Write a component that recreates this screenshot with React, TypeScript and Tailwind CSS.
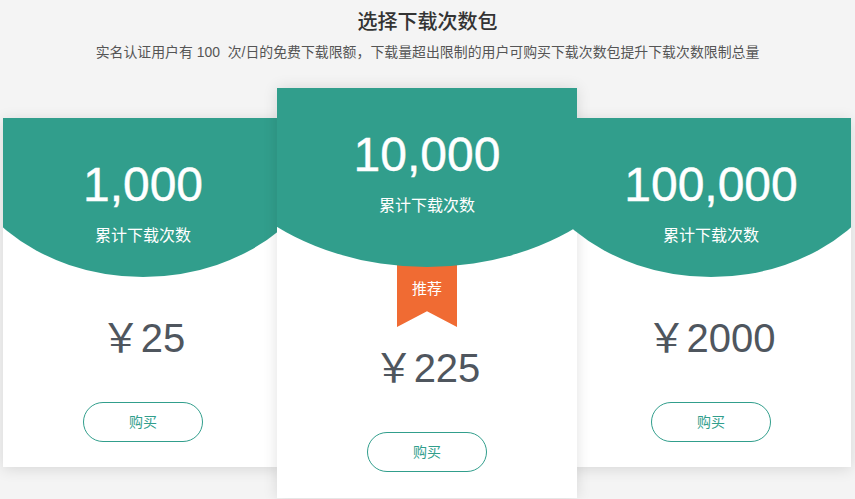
const plans = [
  { count: "1,000", price: "25", featured: false },
  { count: "10,000", price: "225", featured: true },
  { count: "100,000", price: "2000", featured: false },
];

type Plan = (typeof plans)[number];

const PlanCard = ({ plan }: { plan: Plan }) => {
  const big = plan.featured;

  return (
    <div
      className={
        big
          ? "relative z-10 -mx-[6px] flex h-[410px] w-[300px] shrink-0 flex-col items-center bg-white shadow-[0_0_14px_rgba(0,0,0,0.12)]"
          : "mt-[30px] flex h-[349px] w-[280px] shrink-0 flex-col items-center bg-white shadow-[0_2px_14px_rgba(0,0,0,0.12)]"
      }
    >
      {/* green header with curved bottom */}
      <div
        className={
          big
            ? "relative z-10 flex h-[179px] w-full flex-col items-center bg-[#319e8c] pt-[43px] text-white [clip-path:ellipse(238px_179px_at_50%_0)]"
            : "relative z-10 flex h-[159px] w-full flex-col items-center bg-[#319e8c] pt-[43px] text-white [clip-path:ellipse(193px_159px_at_50%_0)]"
        }
      >
        <div className="text-[48px] leading-none [-webkit-text-stroke:0.4px_white]">{plan.count}</div>
        <div className="mt-[19px] text-[16px] leading-none">累计下载次数</div>
      </div>

      {big && (
        <div className="-mt-[3px] h-[63px] w-[60px] bg-[#f06b33] pt-[3px] text-white [clip-path:polygon(0_0,100%_0,100%_100%,50%_75%,0_100%)]">
          <div className="flex h-[45px] items-center justify-center text-[15px]">推荐</div>
        </div>
      )}

      <div
        className={
          big
            ? "mt-[21px] text-[40px] leading-none text-[#4f565e]"
            : "mt-[41px] text-[40px] leading-none text-[#4f565e]"
        }
      >
        ￥{plan.price}
      </div>

      <button className="mt-[44px] h-[40px] w-[120px] rounded-full border border-[#319e8c] text-[14px] text-[#319e8c]">
        购买
      </button>
    </div>
  );
};

const App = () => {
  return (
    <div className="min-h-screen overflow-hidden bg-[#f4f4f4] font-['Liberation_Sans','Noto_Sans_CJK_SC',sans-serif]">
      <div className="pt-[8px] text-center">
        <h1 className="text-[20px] leading-[28px] font-medium text-[#333]">选择下载次数包</h1>
        <p className="mt-[6px] text-[13.9px] leading-[20px] text-[#555]">
          实名认证用户有 100&nbsp; 次/日的免费下载限额，下载量超出限制的用户可购买下载次数包提升下载次数限制总量
        </p>
      </div>

      <div className="mt-[26px] flex items-start pl-[3px]">
        {plans.map((p) => (
          <PlanCard key={p.count} plan={p} />
        ))}
      </div>
    </div>
  );
};

export default App;
